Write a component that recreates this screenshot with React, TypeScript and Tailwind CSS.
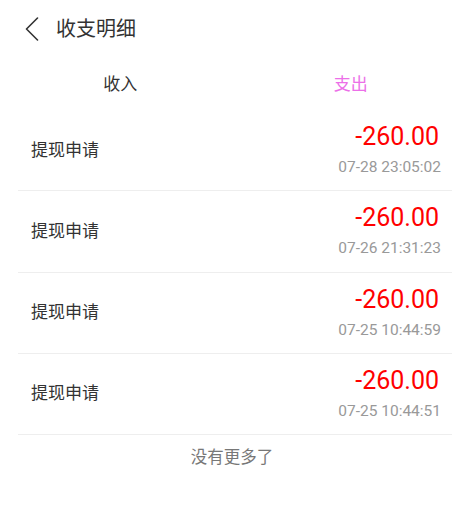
import React, { useState } from 'react';

const records = [
  { title: '提现申请', amount: '-260.00', time: '07-28 23:05:02' },
  { title: '提现申请', amount: '-260.00', time: '07-26 21:31:23' },
  { title: '提现申请', amount: '-260.00', time: '07-25 10:44:59' },
  { title: '提现申请', amount: '-260.00', time: '07-25 10:44:51' },
];

const font = { fontFamily: 'Roboto, "Noto Sans CJK SC", sans-serif' };

export default function App() {
  const [tab, setTab] = useState(1);

  return (
    <div className="w-[474px] h-[514px] bg-white" style={font}>
      {/* header */}
      <div className="h-[58px] flex items-center">
        <button className="ml-[22px] w-[20px] h-[26px] flex items-center justify-center">
          <svg width="14" height="24" viewBox="0 0 14 24" fill="none">
            <path d="M12.5 1L1.5 12L12.5 23" stroke="#333" strokeWidth="1.6" strokeLinecap="round" strokeLinejoin="round" />
          </svg>
        </button>
        <h1 className="ml-[14px] text-[20px] leading-[26px] text-[#333]">收支明细</h1>
      </div>

      {/* tabs */}
      <div className="h-[52px] flex items-center pl-[5px] pr-[8px]">
        {['收入', '支出'].map((t, i) => (
          <button
            key={t}
            onClick={() => setTab(i)}
            className={
              'flex-1 text-center text-[17px] leading-[24px] ' +
              (tab === i ? 'text-[#ec6fe8]' : 'text-[#333]')
            }
          >
            {t}
          </button>
        ))}
      </div>

      {/* list */}
      <div className="mx-[18px] w-[434px]">
        {records.map((r, i) => (
          <div key={i} className="flex items-center justify-between pl-[13px] pr-[13px] pt-[12px] pb-[13.3px] border-b border-[#eeeeee]">
            <span className="text-[17px] leading-[24px] text-[#333]">{r.title}</span>
            <div className="flex flex-col items-end">
              <span className="text-[25px] leading-[30px] text-[#ff0000]">{r.amount}</span>
              <span className="mt-[5px] mr-[-2px] text-[15.5px] leading-[20px] text-[#999]">{r.time}</span>
            </div>
          </div>
        ))}
        <div className="h-[46px] flex items-center justify-center text-[16.5px] text-[#777] pr-[6px]">没有更多了</div>
      </div>
    </div>
  );
}
